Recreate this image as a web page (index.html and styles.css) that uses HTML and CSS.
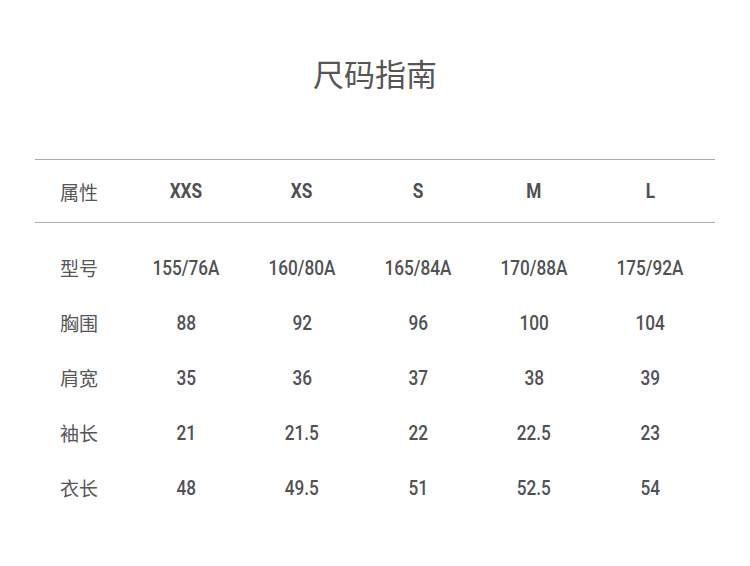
FILE: index.html
```html
<!DOCTYPE html>
<html lang="zh">
<head>
<meta charset="utf-8">
<link rel="stylesheet" href="styles.css">
</head>
<body>
<div class="page">
  <h1 class="title">尺码指南</h1>
  <div class="table">
    <div class="row head">
      <div class="label">属性</div>
      <div class="cell"><span>XXS</span></div>
      <div class="cell"><span>XS</span></div>
      <div class="cell"><span>S</span></div>
      <div class="cell"><span>M</span></div>
      <div class="cell"><span>L</span></div>
    </div>
    <div class="body">
      <div class="row">
        <div class="label">型号</div>
        <div class="cell"><span>155/76A</span></div>
        <div class="cell"><span>160/80A</span></div>
        <div class="cell"><span>165/84A</span></div>
        <div class="cell"><span>170/88A</span></div>
        <div class="cell"><span>175/92A</span></div>
      </div>
      <div class="row">
        <div class="label">胸围</div>
        <div class="cell"><span>88</span></div>
        <div class="cell"><span>92</span></div>
        <div class="cell"><span>96</span></div>
        <div class="cell"><span>100</span></div>
        <div class="cell"><span>104</span></div>
      </div>
      <div class="row">
        <div class="label">肩宽</div>
        <div class="cell"><span>35</span></div>
        <div class="cell"><span>36</span></div>
        <div class="cell"><span>37</span></div>
        <div class="cell"><span>38</span></div>
        <div class="cell"><span>39</span></div>
      </div>
      <div class="row">
        <div class="label">袖长</div>
        <div class="cell"><span>21</span></div>
        <div class="cell"><span>21.5</span></div>
        <div class="cell"><span>22</span></div>
        <div class="cell"><span>22.5</span></div>
        <div class="cell"><span>23</span></div>
      </div>
      <div class="row">
        <div class="label">衣长</div>
        <div class="cell"><span>48</span></div>
        <div class="cell"><span>49.5</span></div>
        <div class="cell"><span>51</span></div>
        <div class="cell"><span>52.5</span></div>
        <div class="cell"><span>54</span></div>
      </div>
    </div>
  </div>
</div>
</body>
</html>
```

FILE: styles.css
```css
html, body {
  margin: 0;
  padding: 0;
  background: #ffffff;
}

.page {
  width: 750px;
  height: 566px;
  padding-top: 53px;
  box-sizing: border-box;
  font-family: Roboto, "Noto Sans CJK SC", sans-serif;
  color: #555558;
  overflow: hidden;
}

.title {
  margin: 0;
  height: 40px;
  line-height: 40px;
  text-align: center;
  font-family: "Noto Sans CJK SC", sans-serif;
  font-weight: 400;
  font-size: 31px;
  color: #555558;
}

.table {
  margin: 66px 35px 0;
}

.row {
  display: grid;
  grid-template-columns: 93px repeat(5, 116px);
  align-items: center;
  height: 55px;
}

.row.head {
  height: 62px;
  border-top: 1px solid #ababab;
  border-bottom: 1px solid #ababab;
}

.body {
  padding-top: 17px;
}

.label {
  padding-left: 25px;
  font-family: "Noto Sans CJK SC", sans-serif;
  font-size: 19px;
  color: #555558;
}

.cell {
  text-align: center;
  font-size: 20px;
  font-weight: 500;
  color: #515154;
}

.cell span {
  display: inline-block;
  transform: scaleX(0.86);
}

.head .cell {
  font-weight: 700;
  color: #505053;
}
```
